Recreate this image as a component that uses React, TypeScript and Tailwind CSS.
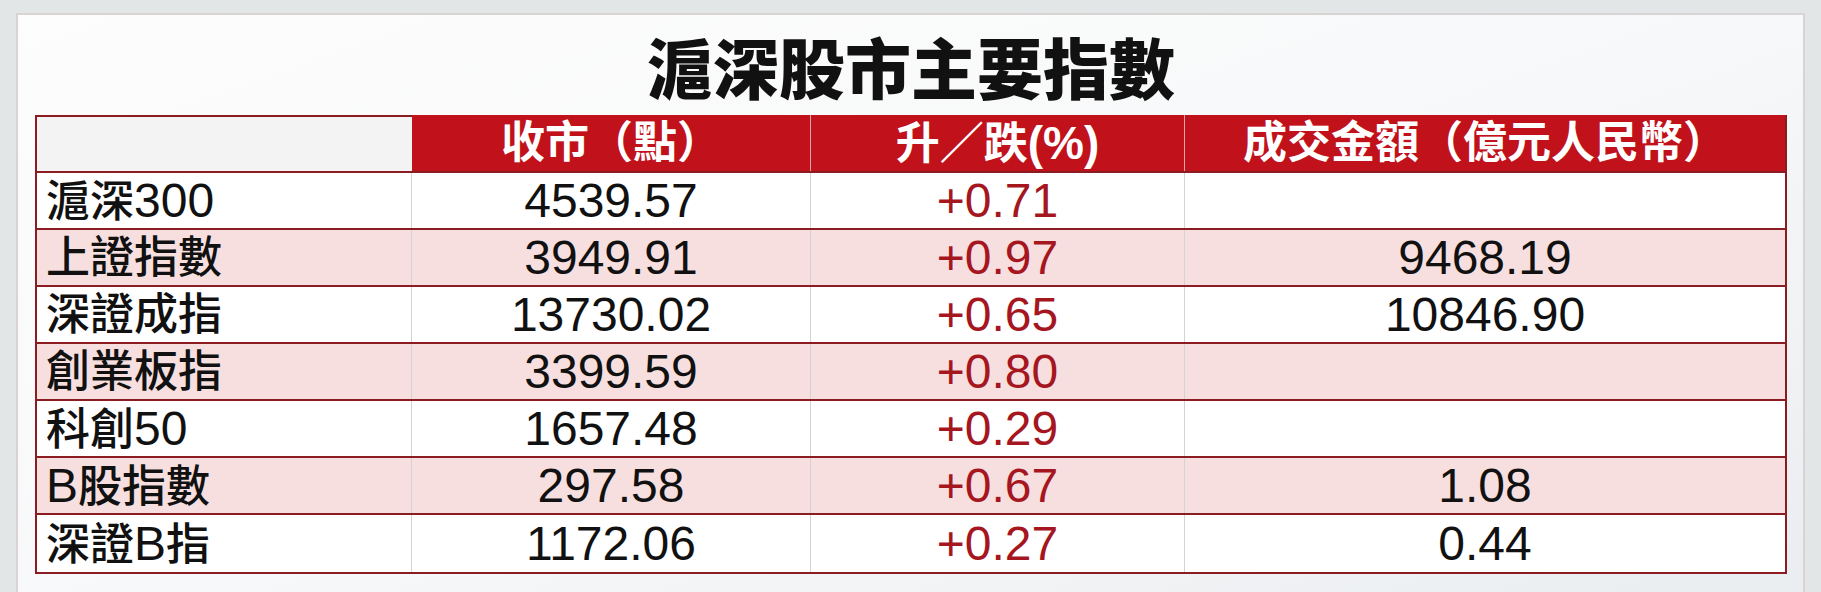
import React from "react";

const CJK = /[\u2e80-\u9fff\uf900-\ufaff\uff00-\uffef\u3000-\u303f]/;

function runs(text: string): { cjk: boolean; s: string }[] {
  const out: { cjk: boolean; s: string }[] = [];
  for (const ch of text) {
    const c = CJK.test(ch);
    const last = out[out.length - 1];
    if (last && last.cjk === c) last.s += ch;
    else out.push({ cjk: c, s: ch });
  }
  return out;
}

function BodyText({ text }: { text: string }) {
  return (
    <span className="whitespace-nowrap leading-none">
      {runs(text).map((r, i) =>
        r.cjk ? (
          <span key={i} className="text-[44px] font-medium">
            {r.s}
          </span>
        ) : (
          <span key={i} className="text-[48px]">
            {r.s}
          </span>
        )
      )}
    </span>
  );
}

function HeadText({ text }: { text: string }) {
  return (
    <span className="whitespace-nowrap leading-none font-bold text-white">
      {runs(text).map((r, i) =>
        r.cjk ? (
          <span key={i} className="text-[44px]">
            {r.s}
          </span>
        ) : (
          <span key={i} className="text-[46px]">
            {r.s}
          </span>
        )
      )}
    </span>
  );
}

const rows = [
  { name: "滬深300", close: "4539.57", chg: "+0.71", vol: "" },
  { name: "上證指數", close: "3949.91", chg: "+0.97", vol: "9468.19" },
  { name: "深證成指", close: "13730.02", chg: "+0.65", vol: "10846.90" },
  { name: "創業板指", close: "3399.59", chg: "+0.80", vol: "" },
  { name: "科創50", close: "1657.48", chg: "+0.29", vol: "" },
  { name: "B股指數", close: "297.58", chg: "+0.67", vol: "1.08" },
  { name: "深證B指", close: "1172.06", chg: "+0.27", vol: "0.44" },
];

export default function App() {
  return (
    <div
      className="w-[1821px] h-[592px] overflow-hidden bg-[#e3e6e6] pt-[13px] px-[16px]"
      style={{ fontFamily: '"Liberation Sans", "Noto Sans CJK TC", sans-serif' }}
    >
      <div className="h-[640px] border-2 border-[#d9d3d3] bg-gradient-to-br from-[#fdfdfd] via-[#f7f8f9] to-[#e9ecef] pl-[17px]">
        <div className="w-[1752px] pt-[17px]">
          <div
            className="h-[66px] text-center text-[66px] leading-[66px] font-black text-[#111111]"
            style={{ fontFamily: '"Noto Sans CJK TC", sans-serif' }}
          >
            滬深股市主要指數
          </div>
        </div>
        <div className="mt-[17px] w-[1752px] border-x-2 border-b-2 border-[#8a1c22]">
          {/* header */}
          <div className="flex h-[58px] border-b-2 border-[#8a1c22]">
            <div className="w-[375px] border-t-2 border-[#8a1c22] bg-[#f3f3f3]" />
            <div className="w-[399px] flex items-center justify-center bg-[#c1121c] border-r border-[#e4a3a6]">
              <HeadText text="收市（點）" />
            </div>
            <div className="w-[374px] flex items-center justify-center bg-[#c1121c] border-r border-[#e4a3a6]">
              <HeadText text="升／跌(%)" />
            </div>
            <div className="flex-1 flex items-center justify-center bg-[#c1121c]">
              <HeadText text="成交金額（億元人民幣）" />
            </div>
          </div>
          {rows.map((r, i) => (
            <div
              key={r.name}
              className={
                "flex h-[57px] text-[#111111] " +
                (i < rows.length - 1 ? "border-b-2 border-[#8a1c22] " : "") +
                (i % 2 === 1 ? "bg-[#f7dfdf]" : "bg-white")
              }
            >
              <div className="w-[375px] flex items-center pl-[9px] border-r border-[#d3d3d3]">
                <BodyText text={r.name} />
              </div>
              <div className="w-[399px] flex items-center justify-center border-r border-[#d3d3d3]">
                <BodyText text={r.close} />
              </div>
              <div className="w-[374px] flex items-center justify-center border-r border-[#d3d3d3] text-[#a5161f]">
                <BodyText text={r.chg} />
              </div>
              <div className="flex-1 flex items-center justify-center">
                <BodyText text={r.vol} />
              </div>
            </div>
          ))}
        </div>
      </div>
    </div>
  );
}
